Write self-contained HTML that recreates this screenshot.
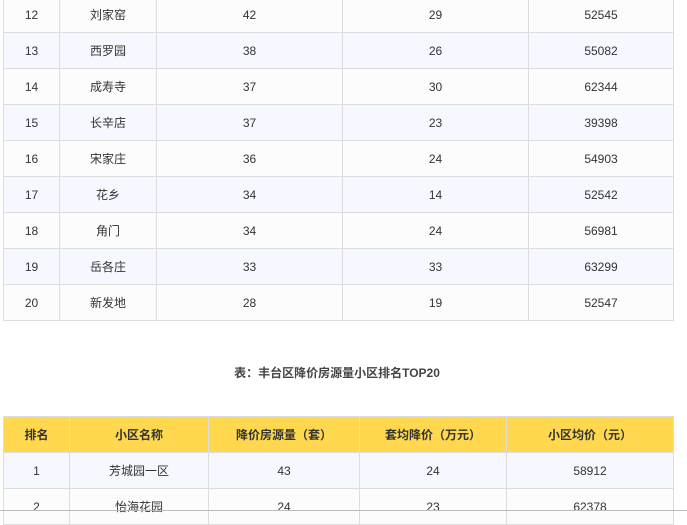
<!DOCTYPE html><html><head><meta charset="utf-8"><style>
body{margin:0;width:687px;height:513px;overflow:hidden;background:#fff;font-family:"Liberation Sans","Noto Sans CJK SC",sans-serif;font-size:12px;color:#333;position:relative}
table{position:absolute;border-collapse:collapse;table-layout:fixed}
td,th{border:1px solid #ddd;text-align:center;padding:0;height:35px}
tr.b td{background:#f5f9ff}tr.w td{background:#fcfcfc}
th{background:#ffd84f;font-weight:bold;font-size:12px;color:#333}
.t{position:absolute;left:0;width:674px;top:364px;text-align:center;font-weight:bold;color:#444;font-size:12px}
.line{position:absolute;left:0;top:510px;width:687px;height:1px;background:#bbb}
</style></head><body>
<table style="left:3px;top:-4px;width:670px">
<colgroup><col style="width:56px"><col style="width:97px"><col style="width:186px"><col style="width:186px"><col style="width:145px"></colgroup>
<tr class="w"><td>12</td><td>刘家窑</td><td>42</td><td>29</td><td>52545</td></tr>
<tr class="b"><td>13</td><td>西罗园</td><td>38</td><td>26</td><td>55082</td></tr>
<tr class="w"><td>14</td><td>成寿寺</td><td>37</td><td>30</td><td>62344</td></tr>
<tr class="b"><td>15</td><td>长辛店</td><td>37</td><td>23</td><td>39398</td></tr>
<tr class="w"><td>16</td><td>宋家庄</td><td>36</td><td>24</td><td>54903</td></tr>
<tr class="b"><td>17</td><td>花乡</td><td>34</td><td>14</td><td>52542</td></tr>
<tr class="w"><td>18</td><td>角门</td><td>34</td><td>24</td><td>56981</td></tr>
<tr class="b"><td>19</td><td>岳各庄</td><td>33</td><td>33</td><td>63299</td></tr>
<tr class="w"><td>20</td><td>新发地</td><td>28</td><td>19</td><td>52547</td></tr>
</table>
<div class="t">表：丰台区降价房源量小区排名TOP20</div>
<table style="left:3px;top:416px;width:670px">
<colgroup><col style="width:66px"><col style="width:139px"><col style="width:151px"><col style="width:147px"><col style="width:167px"></colgroup>
<tr><th>排名</th><th>小区名称</th><th>降价房源量（套）</th><th>套均降价（万元）</th><th>小区均价（元）</th></tr>
<tr class="b"><td>1</td><td>芳城园一区</td><td>43</td><td>24</td><td>58912</td></tr>
<tr class="w"><td>2</td><td>怡海花园</td><td>24</td><td>23</td><td>62378</td></tr>
</table>
<div class="line"></div>
</body></html>
